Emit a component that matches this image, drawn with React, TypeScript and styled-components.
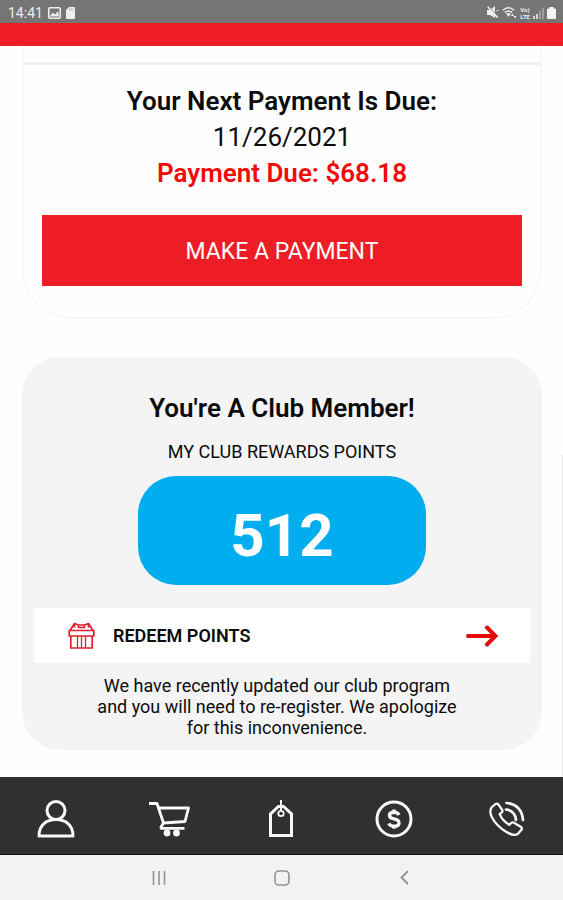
import React from "react";
import styled, { createGlobalStyle } from "styled-components";

const GlobalStyle = createGlobalStyle`
  * { box-sizing: border-box; }
  html, body { margin: 0; padding: 0; }
  body { background: #fefefe; color: #0c0c0c; font-family: Roboto, "Liberation Sans", sans-serif; }
  h2, p { margin: 0; }
  button { font-family: inherit; border: 0; cursor: pointer; }
`;

const Screen = styled.div`
  display: flex;
  flex-direction: column;
  min-height: 100vh;
`;

const StatusBar = styled.div`
  display: flex;
  align-items: center;
  justify-content: space-between;
  height: 23px;
  padding: 2px 7px 0 8px;
  background: #757575;
  color: #eeeeee;
  font-size: 14px;
`;

const StatusGroup = styled.div<{ $gap: number }>`
  display: flex;
  align-items: center;
  gap: ${(p) => p.$gap}px;
`;

const BrandStrip = styled.header`
  height: 23px;
  background: #ee1c25;
`;

const Content = styled.main`
  flex: 1;
  display: flex;
  flex-direction: column;
  gap: 38px;
  padding: 0 20px 27px 22px;
  border-right: 1px solid #eeeeee;
  border-image: linear-gradient(transparent 56%, #e9e9e9 56%) 1;
`;

const PaymentCard = styled.section`
  display: flex;
  flex-direction: column;
  padding: 16px 18px 31px;
  border: solid #f8f8f8;
  border-width: 0 2px 2px;
  border-radius: 0 0 50px 50px;
  text-align: center;
`;

const Divider = styled.hr`
  align-self: stretch;
  height: 3px;
  margin: 0 -18px 18px;
  border: 0;
  background: #edf0f2;
`;

const Heading = styled.h2`
  font-size: 26px;
  line-height: 36px;
  font-weight: 600;
`;

const DueDate = styled.p`
  font-size: 26px;
  line-height: 36px;
`;

const AmountDue = styled(DueDate)`
  color: #f20a0a;
  font-weight: 600;
`;

const PayButton = styled.button`
  height: 71px;
  margin-top: 24px;
  padding-top: 2px;
  background: #ee1c25;
  color: #ffffff;
  font-size: 23px;
`;

const ClubCard = styled.section`
  display: flex;
  flex-direction: column;
  align-items: center;
  padding: 33px 12px 12px;
  border-radius: 38px;
  background: #f4f4f4;
  text-align: center;
`;

const PointsLabel = styled.p`
  margin-top: 14px;
  font-size: 18px;
  line-height: 24px;
`;

const Points = styled.div`
  display: flex;
  align-items: center;
  justify-content: center;
  width: 58%;
  height: 109px;
  margin-top: 12px;
  padding-top: 10px;
  border-radius: 38px;
  background: #00aeef;
  color: #ffffff;
  font-size: 60px;
  font-weight: 700;
`;

const RedeemButton = styled.button`
  display: flex;
  align-items: center;
  align-self: stretch;
  height: 55px;
  margin-top: 23px;
  padding: 0 32px 0 34px;
  background: #ffffff;
  color: #0c0c0c;
  font-size: 18px;
  font-weight: 600;
`;

const RedeemText = styled.span`
  flex: 1;
  padding-left: 18px;
  text-align: left;
`;

const Notice = styled.p`
  max-width: 390px;
  margin-top: 12px;
  padding-right: 10px;
  font-size: 18px;
  line-height: 21px;
`;

const TabBar = styled.nav`
  display: grid;
  grid-template-columns: repeat(5, 1fr);
  height: 78px;
  background: #303030;
  border-bottom: 1px solid #111111;
`;

const TabButton = styled.button`
  display: flex;
  align-items: center;
  justify-content: center;
  padding: 6px 0 0;
  background: transparent;
  color: #f8f8f8;
`;

const SystemBar = styled.div`
  display: flex;
  align-items: center;
  justify-content: center;
  gap: 83px;
  height: 45px;
  background: #f2f2f2;
`;

const SystemButton = styled.button`
  display: flex;
  justify-content: center;
  width: 40px;
  padding: 0;
  background: transparent;
  color: #929292;
`;

const Stroke = styled.svg`
  fill: none;
  stroke: currentColor;
  display: block;
`;

const PictureIcon = () => (
  <svg width="13" height="12" viewBox="0 0 13 12" aria-hidden="true">
    <rect x="0.8" y="0.8" width="11.4" height="10.4" rx="1" fill="none" stroke="#eee" strokeWidth="1.6" />
    <path d="M2 9 5 5.5l2 2L10 4l1 5.5H2Z" fill="#eee" />
  </svg>
);

const CardIcon = () => (
  <svg width="9" height="12" viewBox="0 0 9 12" aria-hidden="true">
    <path d="M3 0h5q1 0 1 1v10q0 1-1 1H1q-1 0-1-1V3Z" fill="#eee" />
    <path d="M3.5 1.5v2M5.3 1.5v2M7.1 1.5v2" stroke="#999" strokeWidth=".7" />
  </svg>
);

const MuteIcon = () => (
  <svg width="12" height="13" viewBox="0 0 12 13" aria-hidden="true">
    <path d="M0 4h3l5-4v12L3 9H0Z" fill="#eee" />
    <path d="m2 .5 10 11" stroke="#757575" strokeWidth="1" />
    <path d="m.8 .8 10 11" stroke="#eee" strokeWidth="1.6" />
    <path d="m9.5 5 2-1" stroke="#eee" />
  </svg>
);

const WifiIcon = () => (
  <svg width="15" height="13" viewBox="0 0 15 13" aria-hidden="true">
    <path d="M.8 4.2q5.7-5 11.4 0M2.8 6.4q3.7-3 7.4 0" fill="none" stroke="#eee" strokeWidth="1.5" />
    <path d="m4 7.8 2.5 3 2.5-3q-2.5-1.6-5 0Z" fill="#eee" />
    <path d="m9 10 1.5-2.5L12 10Zm2.5 0h3L13 12.5Z" fill="#eee" />
  </svg>
);

const Volte = styled.span`
  display: flex;
  flex-direction: column;
  font-size: 6px;
  line-height: 7px;
  font-weight: 700;
`;

const SignalIcon = () => (
  <svg width="11" height="12" viewBox="0 0 11 12" aria-hidden="true">
    <path d="M1 9v3M4 7v5" stroke="#eee" strokeWidth="1.6" />
    <path d="M7 4v8M10 1v11" stroke="#aaa" strokeWidth="1.6" />
  </svg>
);

const BatteryIcon = () => (
  <svg width="9" height="12" viewBox="0 0 9 12" aria-hidden="true">
    <path d="M2.5 0h4v1.5H8q1 0 1 1V11q0 1-1 1H1q-1 0-1-1V2.5q0-1 1-1h1.5Z" fill="#f3f3f3" />
  </svg>
);

const GiftIcon = () => (
  <Stroke width="27" height="27" viewBox="0 0 27 27" color="#dc202c" strokeWidth="1.7" strokeLinejoin="round" aria-hidden="true">
    <path d="M1.2 8.5h24.6V14H1.2ZM2.8 14v12h21.4V14" />
    <path d="M9.5 14v12M13.5 14v12M17.5 14v12" strokeWidth="1.3" />
    <path d="M2 8.5 6.5 1.500l4 1.500v2.500h6V3l4-1.500L25 8.500M10.500 3h6M6.500 1.500v4M20.500 1.500v4" />
  </Stroke>
);

const ArrowIcon = () => (
  <Stroke width="33" height="24" viewBox="0 0 33 24" color="#e50909" strokeWidth="4" strokeLinecap="round" aria-hidden="true">
    <path d="M3 12h26M22 3.5 30.5 12 22 20.5" />
  </Stroke>
);

const UserIcon = () => (
  <Stroke width="38" height="38" viewBox="0 0 38 38" strokeWidth="3" strokeLinejoin="round" aria-hidden="true">
    <circle cx="19" cy="10.5" r="9" />
    <path d="M2 36C2 25 9.5 19.5 19 19.5S36 25 36 36Z" />
  </Stroke>
);

const CartIcon = () => (
  <Stroke width="42" height="36" viewBox="0 0 42 36" strokeWidth="2.8" strokeLinejoin="round" aria-hidden="true">
    <path d="M1 2.5h8l6.5 19.5M10.5 7H40.5L37 20.5 15.500 22l-2.500 4v1.300h23.500" />
    <circle cx="19" cy="32" r="3.4" fill="currentColor" stroke="none" />
    <circle cx="28.5" cy="32" r="3.4" fill="currentColor" stroke="none" />
  </Stroke>
);

const TagIcon = () => (
  <Stroke width="26" height="38" viewBox="0 0 26 38" strokeWidth="3" aria-hidden="true">
    <path d="M2.5 35.5V14L10.5 6.5h5L23.5 14v21.5Z" />
    <path d="M13 0v11" strokeWidth="2" />
    <circle cx="13" cy="13.5" r="2.7" strokeWidth="1.8" />
  </Stroke>
);

const DollarIcon = () => (
  <Stroke width="38" height="38" viewBox="0 0 38 38" strokeWidth="3" aria-hidden="true">
    <circle cx="19" cy="19" r="17" />
    <path d="M24 15q-1.5-2.7-5-2.7-4.5 0-4.5 3.2 0 2.5 4.5 3.4 5 .9 5 4 0 3.3-5 3.3-3.7 0-5.3-2.7M19 9.5V12M19 26.2v2.6" strokeWidth="3.4" />
  </Stroke>
);

const PhoneIcon = () => (
  <Stroke width="36" height="36" viewBox="0 0 36 36" strokeWidth="2.3" strokeLinejoin="round" strokeLinecap="round" aria-hidden="true">
    <path d="M2.5 6.5 6.5 3q1.8-1 3 .6l3.5 5q1 1.5-.3 2.8l-2 1.8q2.5 6.5 9.5 10.6l2-1.8q1.3-1.2 2.8-.3l7 4.3q1.6 1.2.4 2.8l-3 3.5Q25.5 36 17.5 31 7.5 25 3 16.5q-3-6-.5-10Z" />
    <path d="M17 8.5q9 1 10 10.5M17.5 2Q32.5 3.5 34 19" strokeWidth="2.7" />
  </Stroke>
);

const tabs = [
  { label: "Account", Icon: UserIcon },
  { label: "Shop", Icon: CartIcon },
  { label: "Offers", Icon: TagIcon },
  { label: "Payments", Icon: DollarIcon },
  { label: "Call us", Icon: PhoneIcon },
];

export default function App() {
  return (
    <Screen>
      <GlobalStyle />
      <StatusBar>
        <StatusGroup $gap={5}>
          <span>14:41</span>
          <PictureIcon />
          <CardIcon />
        </StatusGroup>
        <StatusGroup $gap={3}>
          <MuteIcon />
          <WifiIcon />
          <Volte><span>Vo)</span><span>LTE</span></Volte>
          <SignalIcon />
          <BatteryIcon />
        </StatusGroup>
      </StatusBar>
      <BrandStrip />
      <Content>
        <PaymentCard>
          <Divider />
          <Heading>Your Next Payment Is Due:</Heading>
          <DueDate>11/26/2021</DueDate>
          <AmountDue>Payment Due: $68.18</AmountDue>
          <PayButton type="button">MAKE A PAYMENT</PayButton>
        </PaymentCard>
        <ClubCard>
          <Heading>You're A Club Member!</Heading>
          <PointsLabel>MY CLUB REWARDS POINTS</PointsLabel>
          <Points>512</Points>
          <RedeemButton type="button">
            <GiftIcon />
            <RedeemText>REDEEM POINTS</RedeemText>
            <ArrowIcon />
          </RedeemButton>
          <Notice>
            We have recently updated our club program and you will need to re-register. We apologize for this
            inconvenience.
          </Notice>
        </ClubCard>
      </Content>
      <TabBar aria-label="Main">
        {tabs.map(({ label, Icon }) => (
          <TabButton key={label} type="button" aria-label={label}>
            <Icon />
          </TabButton>
        ))}
      </TabBar>
      <SystemBar>
        <SystemButton type="button" aria-label="Recent apps">
          <Stroke width="14" height="14" viewBox="0 0 14 14" strokeWidth="1.6">
            <path d="M1.5 0v14M7 0v14M12.5 0v14" />
          </Stroke>
        </SystemButton>
        <SystemButton type="button" aria-label="Home">
          <Stroke width="16" height="16" viewBox="0 0 16 16" strokeWidth="1.6">
            <rect x="1" y="1" width="14" height="14" rx="4" />
          </Stroke>
        </SystemButton>
        <SystemButton type="button" aria-label="Back">
          <Stroke width="9" height="15" viewBox="0 0 9 15" strokeWidth="1.8">
            <path d="M8 1 1.5 7.5 8 14" />
          </Stroke>
        </SystemButton>
      </SystemBar>
    </Screen>
  );
}
